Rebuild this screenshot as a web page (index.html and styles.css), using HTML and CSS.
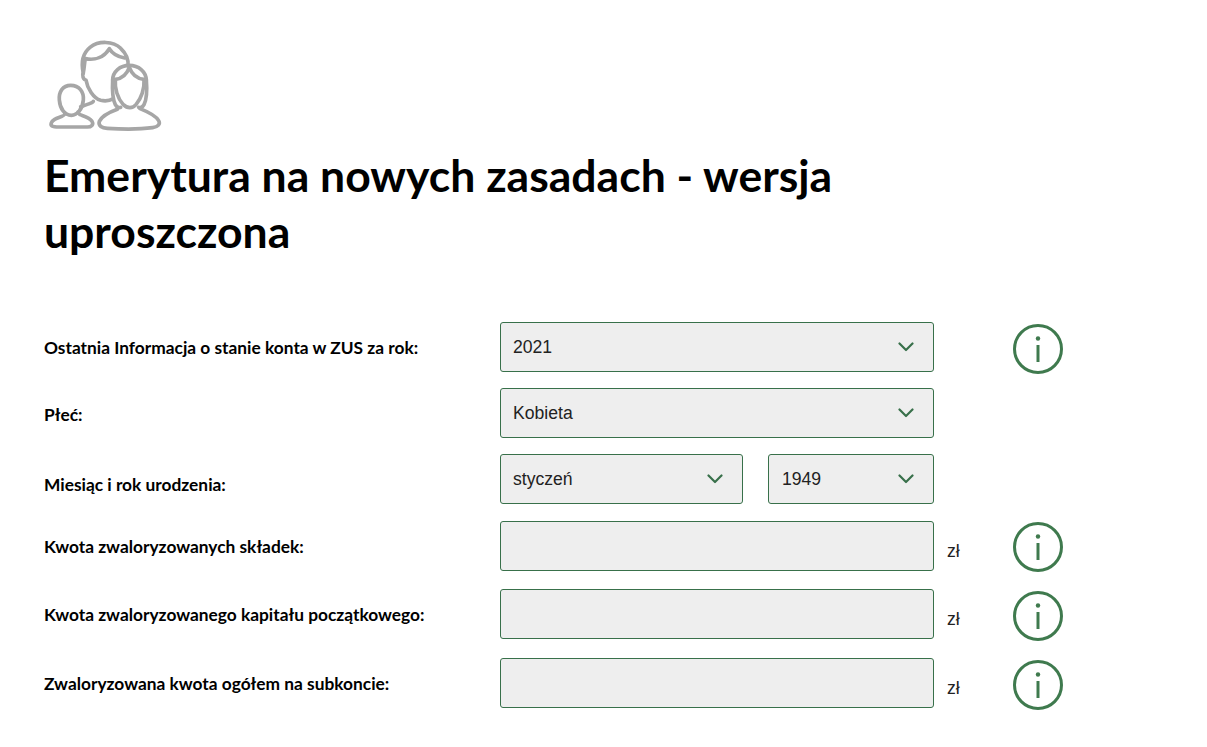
FILE: index.html
```html
<!DOCTYPE html>
<html lang="pl">
<head>
<meta charset="utf-8">
<title>Emerytura na nowych zasadach</title>
<link rel="stylesheet" href="styles.css">
</head>
<body>
<main class="page">
  <svg class="hero" width="150" height="110" viewBox="0 0 450 330" fill="none" stroke="#a6a6a6" stroke-width="11" stroke-linecap="round" stroke-linejoin="round">
    <path d="M160 130C152 95 158 70 180 52C205 32 250 32 272 55C290 72 296 90 294 108"/>
    <path d="M166 86C195 92 222 82 238 56C248 72 262 80 284 84"/>
    <path d="M166 86C163 100 163 115 160 128C155 135 160 150 168 150C172 175 190 205 212 211C225 214 240 212 250 206"/>
    <path d="M190 214C190 218 170 224 152 230"/>
    <path d="M248 150C248 125 270 106 298 106C326 106 348 125 349 150"/>
    <path d="M256 148C274 146 290 134 298 112C306 134 322 146 342 148"/>
    <path d="M256 150C254 175 262 205 280 224C292 236 308 236 318 224C334 205 344 175 342 150"/>
    <path d="M248 150C246 185 250 212 256 224C260 232 268 234 272 232"/>
    <path d="M349 150C352 185 348 212 342 224C338 232 330 234 326 232"/>
    <path d="M262 238C240 246 216 258 208 274C204 288 216 294 232 295C280 298 330 298 368 293C384 291 392 282 386 272C376 254 350 244 330 236"/>
    <path d="M122 166C148 166 162 186 160 210C158 236 142 256 124 256C104 256 90 236 88 210C86 186 98 166 122 166Z"/>
    <path d="M104 252C104 258 86 262 74 268C64 274 60 284 66 288C72 292 86 291 96 291H172C184 291 192 284 186 274C178 262 160 258 150 254C144 250 144 246 144 246"/>
  </svg>
  <h1 class="title">Emerytura na nowych zasadach - wersja uproszczona</h1>
  <form class="form">
    <div class="row r1">
      <span class="label">Ostatnia Informacja o stanie konta w ZUS za rok:</span>
      <div class="field select"><span>2021</span><svg class="chev" width="16" height="10" viewBox="0 0 16 10"><path d="M1.500 1.500L8 8L14.500 1.500"/></svg></div>
      <span class="unit"></span>
      <svg class="info" width="50" height="50" viewBox="0 0 50 50"><circle cx="25" cy="25" r="23.500"/><circle class="dot" cx="25" cy="14.500" r="2.200"/><path d="M25 21V38"/></svg>
    </div>
    <div class="row r2">
      <span class="label">Płeć:</span>
      <div class="field select"><span>Kobieta</span><svg class="chev" width="16" height="10" viewBox="0 0 16 10"><path d="M1.500 1.500L8 8L14.500 1.500"/></svg></div>
    </div>
    <div class="row r3">
      <span class="label">Miesiąc i rok urodzenia:</span>
      <div class="pair">
        <div class="field select month"><span>styczeń</span><svg class="chev" width="16" height="10" viewBox="0 0 16 10"><path d="M1.500 1.500L8 8L14.500 1.500"/></svg></div>
        <div class="field select year"><span>1949</span><svg class="chev" width="16" height="10" viewBox="0 0 16 10"><path d="M1.500 1.500L8 8L14.500 1.500"/></svg></div>
      </div>
    </div>
    <div class="row r4">
      <span class="label">Kwota zwaloryzowanych składek:</span>
      <div class="field"></div>
      <span class="unit">zł</span>
      <svg class="info" width="50" height="50" viewBox="0 0 50 50"><circle cx="25" cy="25" r="23.500"/><circle class="dot" cx="25" cy="14.500" r="2.200"/><path d="M25 21V38"/></svg>
    </div>
    <div class="row r5">
      <span class="label">Kwota zwaloryzowanego kapitału początkowego:</span>
      <div class="field"></div>
      <span class="unit">zł</span>
      <svg class="info" width="50" height="50" viewBox="0 0 50 50"><circle cx="25" cy="25" r="23.500"/><circle class="dot" cx="25" cy="14.500" r="2.200"/><path d="M25 21V38"/></svg>
    </div>
    <div class="row r6">
      <span class="label">Zwaloryzowana kwota ogółem na subkoncie:</span>
      <div class="field"></div>
      <span class="unit">zł</span>
      <svg class="info" width="50" height="50" viewBox="0 0 50 50"><circle cx="25" cy="25" r="23.500"/><circle class="dot" cx="25" cy="14.500" r="2.200"/><path d="M25 21V38"/></svg>
    </div>
  </form>
</main>
</body>
</html>
```
FILE: styles.css
```css
html, body {
  margin: 0;
  padding: 0;
  background: #fff;
}
body {
  height: 747px;
  overflow: hidden;
  font-family: Lato, sans-serif;
  color: #000;
}
.page {
  padding: 30px 0 0 44px;
}
.hero {
  display: block;
  margin-left: -14px;
}
.title {
  width: 860px;
  margin: 7px 0 0 0;
  font-size: 44.500px;
  line-height: 56px;
  font-weight: 700;
  color: #000;
}
.form {
  margin-top: 63px;
}
.row {
  display: grid;
  grid-template-columns: 456px 434px 79px 50px;
  grid-template-rows: 50px;
  height: 50px;
  align-items: center;
}
.r2, .r3 { margin-top: 16px; }
.r4 { margin-top: 17px; }
.r5 { margin-top: 18px; }
.r6 { margin-top: 19px; }
.label {
  padding-top: 2px;
  font-size: 17.330px;
  font-weight: 700;
  line-height: 20px;
  color: #000;
}
.r2 .label { padding-top: 3px; }
.r3 .label { padding-top: 12px; }
.field {
  box-sizing: border-box;
  height: 50px;
  border: 1px solid #38704a;
  border-radius: 3px;
  background: #eee;
}
.select {
  display: flex;
  align-items: center;
  justify-content: space-between;
  padding: 0 19px 0 12px;
  font-family: "Liberation Sans", Arial, sans-serif;
  font-size: 17.600px;
  color: #222;
}
.select span { padding-top: 1px; }
.year { padding-left: 13px; }
.pair {
  display: flex;
  gap: 25px;
}
.month { width: 243px; }
.year { width: 166px; }
.chev {
  fill: none;
  stroke: #38704a;
  stroke-width: 2.200;
  stroke-linecap: round;
  stroke-linejoin: round;
}
.unit {
  padding: 10px 0 0 13px;
  font-family: "Liberation Sans", Arial, sans-serif;
  font-size: 17.600px;
  color: #222;
}
.info {
  fill: none;
  stroke: #3f7a4e;
  stroke-width: 3;
  margin-top: 4px;
}
.r4 .info { margin-top: 2px; }
.info .dot {
  fill: #3f7a4e;
  stroke: none;
}
```
